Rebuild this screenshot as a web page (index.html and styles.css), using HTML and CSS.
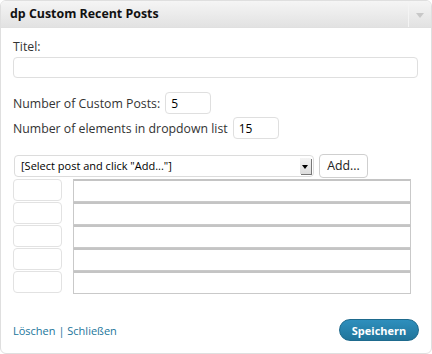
FILE: index.html
```html
<!DOCTYPE html>
<html lang="en">
<head>
    <meta charset="UTF-8">
    <title>dp Custom Recent Posts</title>
    <link rel="stylesheet" href="styles.css">
</head>
<body>
    <div class="widget">
        <div class="widget-top">
            <div class="widget-title">dp Custom Recent Posts</div>
            <div class="widget-toggle"><span class="toggle-arrow"></span></div>
        </div>
        <form class="widget-inside">
            <label class="field-label" for="title">Titel:</label>
            <input class="wide-input" type="text" id="title">

            <div class="inline-row first">
                <label for="count">Number of Custom Posts:</label>
                <input class="small-input" type="text" id="count" value="5">
            </div>
            <div class="inline-row">
                <label for="dropdown">Number of elements in dropdown list</label>
                <input class="small-input" type="text" id="dropdown" value="15">
            </div>

            <div class="select-row">
                <div class="select-wrap">
                    <select class="post-select">
                        <option>[Select post and click "Add..."]</option>
                    </select>
                    <span class="select-arrow"></span>
                </div>
                <button type="button" class="add-button">Add...</button>
            </div>

            <div class="post-list">
                <div class="post-row"><input class="order-box" type="text"><input class="post-box" type="text"></div>
                <div class="post-row"><input class="order-box" type="text"><input class="post-box" type="text"></div>
                <div class="post-row"><input class="order-box" type="text"><input class="post-box" type="text"></div>
                <div class="post-row"><input class="order-box" type="text"><input class="post-box" type="text"></div>
                <div class="post-row"><input class="order-box" type="text"><input class="post-box" type="text"></div>
            </div>

            <div class="widget-control">
                <div class="control-links"><a href="#">Löschen</a> | <a href="#">Schließen</a></div>
                <button type="button" class="save-button">Speichern</button>
            </div>
        </form>
    </div>
</body>
</html>
```

FILE: styles.css
```css
body {
    margin: 0;
    padding: 0;
    background-color: #fff;
    font-family: "Open Sans", "DejaVu Sans", sans-serif;
    font-size: 12.3px;
    color: #333;
}
.widget {
    box-sizing: border-box;
    width: 432px;
    height: 354px;
    border: 1px solid #dfdfdf;
    border-radius: 6px;
    overflow: hidden;
    background-color: #fff;
}
.widget-top {
    display: flex;
    height: 26px;
    background: linear-gradient(#f5f5f5, #e2e2e2);
    border-bottom: 1px solid #e0e0e0;
}
.widget-title {
    flex: 1;
    padding-left: 9px;
    line-height: 26px;
    font-size: 12.4px;
    font-weight: bold;
    color: #111;
}
.widget-toggle {
    width: 22px;
    border-left: 1px solid #f4f4f4;
    display: flex;
    align-items: center;
    justify-content: center;
}
.toggle-arrow {
    width: 0;
    height: 0;
    border-left: 4px solid transparent;
    border-right: 4px solid transparent;
    border-top: 5px solid #c8c8c8;
    margin-top: 2px;
}
.widget-inside {
    padding: 12px 12px 0 12px;
}
.field-label {
    display: block;
    line-height: 14px;
}
.wide-input {
    display: block;
    box-sizing: border-box;
    width: 405px;
    height: 21px;
    margin-top: 3px;
    border: 1px solid #dfdfdf;
    border-radius: 4px;
}
.inline-row {
    display: flex;
    align-items: center;
    height: 22px;
    margin-top: 3px;
}
.inline-row.first {
    margin-top: 14px;
}
.inline-row label {
    margin-right: 5px;
}
.small-input {
    box-sizing: border-box;
    width: 46px;
    height: 22px;
    padding: 0 5px;
    border: 1px solid #dfdfdf;
    border-radius: 4px;
    font-family: inherit;
    font-size: 12px;
    color: #000;
}
.select-row {
    display: flex;
    align-items: center;
    margin-top: 14px;
    height: 25px;
}
.select-wrap {
    position: relative;
    margin-left: 1px;
}
.post-select {
    appearance: none;
    box-sizing: border-box;
    width: 300px;
    height: 22px;
    padding: 0 6px;
    border: 1px solid #dcdcdc;
    border-radius: 4px;
    background-color: #fff;
    font-family: inherit;
    font-size: 11px;
    color: #000;
}
.select-arrow {
    position: absolute;
    right: 3px;
    top: 3px;
    width: 11px;
    height: 16px;
    background: linear-gradient(#f4f4f4, #dcdcdc);
    box-shadow: 1px 1px 0 #777;
}
.select-arrow::after {
    content: "";
    position: absolute;
    left: 2px;
    top: 7px;
    border-left: 3px solid transparent;
    border-right: 3px solid transparent;
    border-top: 4px solid #000;
}
.add-button {
    margin-left: 5px;
    box-sizing: border-box;
    width: 49px;
    height: 24px;
    padding: 0;
    border: 1px solid #cfcfcf;
    border-radius: 4px;
    background-color: #fff;
    font-family: inherit;
    font-size: 12.3px;
    color: #222;
}
.post-list {
    margin-top: 1px;
}
.post-row {
    display: flex;
    height: 23px;
}
.order-box {
    box-sizing: border-box;
    width: 49px;
    height: 22px;
    border: 1px solid #e2e2e2;
    border-radius: 4px;
    margin-right: 11px;
}
.post-box {
    box-sizing: border-box;
    width: 338px;
    height: 23px;
    border: 1px solid #c9c9c9;
    border-top: 2px solid #c4c4c4;
    border-radius: 0;
}
.widget-control {
    display: flex;
    justify-content: space-between;
    align-items: center;
    margin-top: 25px;
    height: 22px;
}
.control-links {
    color: #21759b;
    font-size: 11px;
}
.control-links a {
    color: #21759b;
    text-decoration: none;
}
.save-button {
    box-sizing: border-box;
    width: 80px;
    height: 22px;
    border: 1px solid #1e6a8d;
    border-radius: 11px;
    background: linear-gradient(#2e8fbd, #21759b);
    color: #fff;
    font-family: inherit;
    font-size: 11px;
    font-weight: bold;
}
```
